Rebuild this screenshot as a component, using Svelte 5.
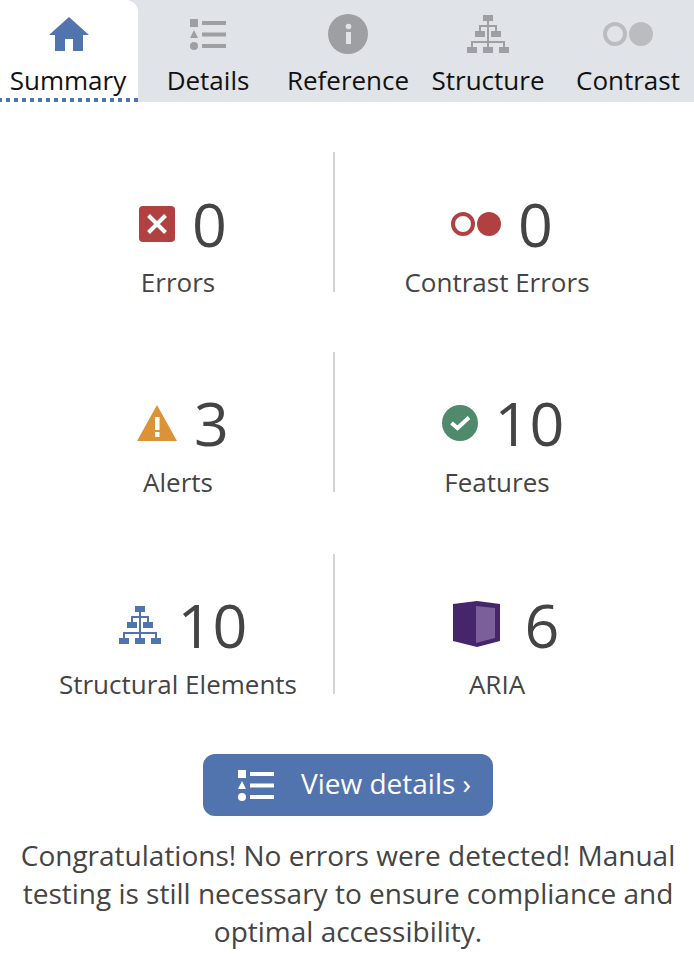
<script>
  const tabs = ['Summary', 'Details', 'Reference', 'Structure', 'Contrast'];
</script>

{#snippet listIcon(cls)}
  <svg class={cls} width="36" height="31" viewBox="0 0 36 31">
    <rect x="0" y="0" width="8" height="8" />
    <path d="M4 11 L8 19 H0 Z" />
    <circle cx="4" cy="27" r="4" />
    <rect x="12" y="2" width="24" height="4" />
    <rect x="12" y="13.500" width="24" height="4" />
    <rect x="12" y="25" width="24" height="4" />
  </svg>
{/snippet}

{#snippet treeIcon(w, h)}
  <svg class="tree" width={w} height={h} viewBox="0 0 42 38">
    <rect x="16" y="0" width="10" height="6" />
    <rect x="8" y="16" width="10" height="6" />
    <rect x="24" y="16" width="10" height="6" />
    <rect x="0" y="32" width="10" height="6" />
    <rect x="16" y="32" width="10" height="6" />
    <rect x="32" y="32" width="10" height="6" />
    <path d="M21 6 V11 M13 16 V11 H29 V16 M21 11 V27 M5 32 V27 H37 V32 M21 27 V32" fill="none" stroke-width="2" />
  </svg>
{/snippet}

<div class="panel">
  <nav class="tabs">
    {#each tabs as tab, i}
      <div class="tab" class:active={i === 0}>
        <div class="icon">
          {#if i === 0}
            <svg width="40" height="34" viewBox="0 0 40 34"><path class="home" d="M20 0 L40 18 H34 V34 H24 V22 H16 V34 H6 V18 H0 Z" /></svg>
          {:else if i === 1}
            {@render listIcon('grey')}
          {:else if i === 2}
            <svg width="40" height="40" viewBox="0 0 40 40">
              <circle class="grey-fill" cx="20" cy="20" r="20" />
              <rect x="18" y="18" width="5" height="12" fill="#e0e4e8" />
              <circle cx="20.500" cy="12.500" r="2.800" fill="#e0e4e8" />
            </svg>
          {:else if i === 3}
            <span class="grey-tree">{@render treeIcon(42, 38)}</span>
          {:else}
            <svg width="50" height="24" viewBox="0 0 50 24">
              <circle cx="12" cy="12" r="10" fill="none" stroke="#bbbcc0" stroke-width="4" />
              <circle cx="38" cy="12" r="12" fill="#bbbcc0" />
            </svg>
          {/if}
        </div>
        <span class="tab-label">{tab}</span>
      </div>
    {/each}
  </nav>

  <section class="stats">
    <div class="stat left">
      <div class="figure">
        <svg width="36" height="36" viewBox="0 0 36 36">
          <rect width="36" height="36" rx="4" fill="#b04140" />
          <path d="M9.500 9.500 L26.500 26.500 M26.500 9.500 L9.500 26.500" stroke="#fff" stroke-width="4" />
        </svg>
        <span class="num">0</span>
      </div>
      <div class="label">Errors</div>
    </div>
    <div class="stat right">
      <div class="figure tight">
        <svg width="50" height="24" viewBox="0 0 50 24">
          <circle cx="12" cy="12" r="10" fill="none" stroke="#b04140" stroke-width="4" />
          <circle cx="38" cy="12" r="12" fill="#b04140" />
        </svg>
        <span class="num">0</span>
      </div>
      <div class="label">Contrast Errors</div>
    </div>

    <div class="stat left">
      <div class="figure lifted">
        <svg width="40" height="36" viewBox="0 0 40 36">
          <path d="M20 0 L40 36 H0 Z" fill="#db9338" />
          <rect x="18" y="12" width="4.500" height="13" fill="#fff" />
          <rect x="18" y="27" width="4.500" height="5" fill="#fff" />
        </svg>
        <span class="num">3</span>
      </div>
      <div class="label">Alerts</div>
    </div>
    <div class="stat right">
      <div class="figure lifted">
        <svg width="36" height="36" viewBox="0 0 36 36">
          <circle cx="18" cy="18" r="18" fill="#4f8a6c" />
          <path d="M9.500 18 L15.500 23 L27 12.500" fill="none" stroke="#fff" stroke-width="4" />
        </svg>
        <span class="num">10</span>
      </div>
      <div class="label">Features</div>
    </div>

    <div class="stat left">
      <div class="figure lifted">
        <span class="blue-tree">{@render treeIcon(42, 38)}</span>
        <span class="num">10</span>
      </div>
      <div class="label">Structural Elements</div>
    </div>
    <div class="stat right">
      <div class="figure lifted wide">
        <svg class="cube" width="47" height="46" viewBox="0 0 47 46">
          <path d="M0 3 L24 0 L47 3 V40 L24 46 L0 40 Z" fill="#45266d" />
          <path d="M23 5 L42 7 V37 L23 42 Z" fill="#7a5f9b" />
        </svg>
        <span class="num">6</span>
      </div>
      <div class="label">ARIA</div>
    </div>
  </section>

  <div class="action">
    <button class="view">
      {@render listIcon('white')}
      <span class="view-text">View details ›</span>
    </button>
  </div>

  <p class="message">Congratulations! No errors were detected! Manual testing is still necessary to ensure compliance and optimal accessibility.</p>
</div>

<style>
  :global(body) {
    margin: 0;
    background: #fff;
  }
  .panel {
    width: 694px;
    height: 966px;
    overflow: hidden;
    font-family: "Open Sans", sans-serif;
    color: #444;
  }
  .tabs {
    display: grid;
    grid-template-columns: 138px repeat(4, 140px);
    height: 102px;
    background: #e0e4e8;
  }
  .tab {
    display: flex;
    flex-direction: column;
    align-items: center;
    box-sizing: border-box;
    height: 102px;
    color: #111;
    position: relative;
  }
  .tab.active {
    background: #fff;
    border-top-right-radius: 12px;
  }
  .tab.active .tab-label { margin-left: -2px; }
  .tab.active::after {
    content: "";
    position: absolute;
    left: 0;
    right: 0;
    bottom: 0;
    height: 4px;
    background: repeating-linear-gradient(90deg, #5274ae 0 2px, transparent 2px 6px, #5274ae 6px 8px);
  }
  .icon {
    height: 40px;
    margin-top: 14px;
    display: flex;
    align-items: center;
    justify-content: center;
  }
  .tab-label {
    font-size: 26px;
    line-height: 34px;
    margin-top: 9px;
    white-space: nowrap;
  }
  .home { fill: #5274ae; }
  .grey rect, .grey path, .grey circle { fill: #9d9fa2; }
  .white rect, .white path, .white circle { fill: #fff; }
  .grey-fill { fill: #9d9fa2; }
  .tree { display: block; }
  .grey-tree .tree rect { fill: #9d9fa2; }
  .grey-tree .tree path { stroke: #9d9fa2; }
  .blue-tree .tree rect { fill: #5274ae; }
  .blue-tree .tree path { stroke: #5274ae; }
  .stats {
    display: grid;
    grid-template-columns: 310px 328px;
    margin: 50px 0 0 23px;
  }
  .stat {
    display: flex;
    flex-direction: column;
    align-items: center;
    box-sizing: border-box;
    height: 140px;
    margin-bottom: 60px;
  }
  .stat:nth-child(3), .stat:nth-child(4) { margin-bottom: 62px; }
  .stat.right { border-left: 2px solid #d4d4d4; }
  .stat.right .label { padding-right: 2px; }
  .figure {
    display: flex;
    align-items: center;
    justify-content: center;
    gap: 17px;
    height: 84px;
    margin-top: 30px;
    padding-left: 10px;
  }
  .figure.tight { padding-left: 8px; }
  .figure.lifted { margin-top: 29px; }
  .figure.wide { gap: 25px; padding-left: 16px; }
  .cube { margin-bottom: 2px; }
  .num {
    font-size: 61px;
    line-height: 84px;
    color: #444;
  }
  .label {
    font-size: 26px;
    line-height: 34px;
    margin-top: -1px;
    color: #444;
    white-space: nowrap;
  }
  .figure.lifted + .label { margin-top: 0; }
  .action {
    display: flex;
    justify-content: center;
    padding-left: 2px;
  }
  .view {
    width: 290px;
    height: 62px;
    border: 0;
    border-radius: 12px;
    background: #5274ae;
    color: #fff;
    font: inherit;
    font-size: 28px;
    display: flex;
    align-items: center;
    gap: 27px;
    padding: 0 0 0 35px;
  }
  .view-text { margin-bottom: 4px; }
  .message {
    margin: 20px 0 0;
    padding: 0 14px 0 16px;
    text-align: center;
    font-size: 28px;
    line-height: 38px;
    color: #444;
  }
</style>
